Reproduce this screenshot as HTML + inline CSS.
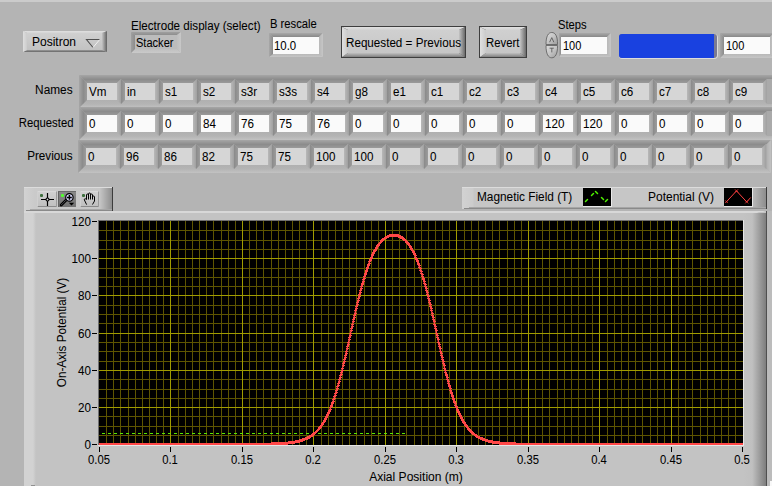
<!DOCTYPE html><html><head><meta charset="utf-8"><style>
html,body{margin:0;padding:0;}
body{width:772px;height:486px;overflow:hidden;position:relative;background:#b4b4b4;font-family:"Liberation Sans",sans-serif;}
.t{position:absolute;white-space:nowrap;line-height:13px;color:#000;-webkit-text-stroke:0.05px #000;}
svg{position:absolute;left:0;top:0;}

</style></head><body>
<svg width="772" height="486"><defs><linearGradient id="g0" x1="0" y1="0" x2="0" y2="1"><stop offset="0" stop-color="#e0e0e0"/><stop offset="1" stop-color="#d4d4d4"/></linearGradient><linearGradient id="g1" x1="1" y1="0" x2="0" y2="0"><stop offset="0" stop-color="#626262"/><stop offset="1" stop-color="#c4c4c4"/></linearGradient><linearGradient id="g2" x1="0" y1="1" x2="0" y2="0"><stop offset="0" stop-color="#666666"/><stop offset="1" stop-color="#9c9c9c"/></linearGradient><linearGradient id="g3" x1="0" y1="0" x2="1" y2="0"><stop offset="0" stop-color="#dedede"/><stop offset="1" stop-color="#cccccc"/></linearGradient><linearGradient id="g4" x1="0" y1="0" x2="0" y2="1"><stop offset="0" stop-color="#d0d0d0"/><stop offset="1" stop-color="#c2c2c2"/></linearGradient><linearGradient id="g5" x1="0" y1="0" x2="0" y2="1"><stop offset="0" stop-color="#a0a0a0"/><stop offset="1" stop-color="#8e8e8e"/></linearGradient><linearGradient id="g6" x1="1" y1="0" x2="0" y2="0"><stop offset="0" stop-color="#c8c8c8"/><stop offset="1" stop-color="#bebebe"/></linearGradient><linearGradient id="g7" x1="0" y1="1" x2="0" y2="0"><stop offset="0" stop-color="#cacaca"/><stop offset="1" stop-color="#c0c0c0"/></linearGradient><linearGradient id="g8" x1="0" y1="0" x2="1" y2="0"><stop offset="0" stop-color="#a0a0a0"/><stop offset="1" stop-color="#8c8c8c"/></linearGradient><linearGradient id="g9" x1="0" y1="0" x2="0" y2="1"><stop offset="0" stop-color="#a8a8a8"/><stop offset="1" stop-color="#888888"/></linearGradient><linearGradient id="g10" x1="1" y1="0" x2="0" y2="0"><stop offset="0" stop-color="#c6c6c6"/><stop offset="1" stop-color="#b8b8b8"/></linearGradient><linearGradient id="g11" x1="0" y1="1" x2="0" y2="0"><stop offset="0" stop-color="#c6c6c6"/><stop offset="1" stop-color="#b8b8b8"/></linearGradient><linearGradient id="g12" x1="0" y1="0" x2="1" y2="0"><stop offset="0" stop-color="#a8a8a8"/><stop offset="1" stop-color="#8a8a8a"/></linearGradient><linearGradient id="g13" x1="0" y1="0" x2="0" y2="1"><stop offset="0" stop-color="#e2e2e2"/><stop offset="1" stop-color="#d2d2d2"/></linearGradient><linearGradient id="g14" x1="1" y1="0" x2="0" y2="0"><stop offset="0" stop-color="#6a6a6a"/><stop offset="1" stop-color="#c4c4c4"/></linearGradient><linearGradient id="g15" x1="0" y1="1" x2="0" y2="0"><stop offset="0" stop-color="#808080"/><stop offset="1" stop-color="#c0c0c0"/></linearGradient><linearGradient id="g16" x1="0" y1="0" x2="1" y2="0"><stop offset="0" stop-color="#e0e0e0"/><stop offset="1" stop-color="#cacaca"/></linearGradient><linearGradient id="g17" x1="0" y1="0" x2="0" y2="1"><stop offset="0" stop-color="#d0d0d0"/><stop offset="1" stop-color="#c6c6c6"/></linearGradient><linearGradient id="g18" x1="0" y1="0" x2="0" y2="1"><stop offset="0" stop-color="#a6a6a6"/><stop offset="1" stop-color="#8e8e8e"/></linearGradient><linearGradient id="g19" x1="1" y1="0" x2="0" y2="0"><stop offset="0" stop-color="#c2c2c2"/><stop offset="1" stop-color="#b2b2b2"/></linearGradient><linearGradient id="g20" x1="0" y1="1" x2="0" y2="0"><stop offset="0" stop-color="#c2c2c2"/><stop offset="1" stop-color="#b4b4b4"/></linearGradient><linearGradient id="g21" x1="0" y1="0" x2="1" y2="0"><stop offset="0" stop-color="#a6a6a6"/><stop offset="1" stop-color="#8e8e8e"/></linearGradient><linearGradient id="g22" x1="0" y1="0" x2="0" y2="1"><stop offset="0" stop-color="#8a8a8a"/><stop offset="1" stop-color="#9a9a9a"/></linearGradient><linearGradient id="g23" x1="1" y1="0" x2="0" y2="0"><stop offset="0" stop-color="#a0a0a0"/><stop offset="1" stop-color="#b8b8b8"/></linearGradient><linearGradient id="g24" x1="0" y1="1" x2="0" y2="0"><stop offset="0" stop-color="#b4b4b4"/><stop offset="1" stop-color="#b0b0b0"/></linearGradient><linearGradient id="g25" x1="0" y1="0" x2="1" y2="0"><stop offset="0" stop-color="#8a8a8a"/><stop offset="1" stop-color="#9c9c9c"/></linearGradient><linearGradient id="g26" x1="0" y1="0" x2="1" y2="0"><stop offset="0" stop-color="#d2d2d2"/><stop offset="0.75" stop-color="#d2d2d2"/><stop offset="1" stop-color="#c3c3c3"/></linearGradient><linearGradient id="g27" x1="0" y1="0" x2="1" y2="0"><stop offset="0" stop-color="#c3c3c3"/><stop offset="0.4" stop-color="#c0c0c0"/><stop offset="1" stop-color="#7e7e7e"/></linearGradient><linearGradient id="g28" x1="0" y1="0" x2="1" y2="0"><stop offset="0" stop-color="#d2d2d2"/><stop offset="0.12" stop-color="#cacaca"/><stop offset="0.85" stop-color="#c6c6c6"/><stop offset="1" stop-color="#8a8a8a"/></linearGradient><linearGradient id="g29" x1="0" y1="0" x2="0" y2="1"><stop offset="0" stop-color="#d0d0d0"/><stop offset="1" stop-color="#c0c0c0"/></linearGradient><linearGradient id="g30" x1="0" y1="0" x2="0" y2="1"><stop offset="0" stop-color="#8a8a8a"/><stop offset="1" stop-color="#727272"/></linearGradient><linearGradient id="g31" x1="0" y1="0" x2="1" y2="0"><stop offset="0" stop-color="#d2d2d2"/><stop offset="0.035" stop-color="#cccccc"/><stop offset="0.04" stop-color="#c6c6c6"/><stop offset="0.94" stop-color="#c6c6c6"/><stop offset="1" stop-color="#8a8a8a"/></linearGradient></defs><rect x="0" y="0" width="772" height="2" fill="#cbcbcb"/>
<polygon points="23,31 107,31 102,33 27,33" fill="url(#g0)"/>
<polygon points="107,31 107,52 102,50 102,33" fill="url(#g1)"/>
<polygon points="23,52 107,52 102,50 27,50" fill="url(#g2)"/>
<polygon points="23,31 27,33 27,50 23,52" fill="url(#g3)"/>
<rect x="27" y="33" width="75" height="17" fill="url(#g4)"/>
<polygon points="131,32 181,32 177,35 135,35" fill="url(#g5)"/>
<polygon points="181,32 181,53 177,49 177,35" fill="url(#g6)"/>
<polygon points="131,53 181,53 177,49 135,49" fill="url(#g7)"/>
<polygon points="131,32 135,35 135,49 131,53" fill="url(#g8)"/>
<rect x="135" y="35" width="42" height="14" fill="#bcbcbc"/>
<polygon points="269,33 323,33 319,37 273,37" fill="url(#g9)"/>
<polygon points="323,33 323,57 319,54 319,37" fill="url(#g10)"/>
<polygon points="269,57 323,57 319,54 273,54" fill="url(#g11)"/>
<polygon points="269,33 273,37 273,54 269,57" fill="url(#g12)"/>
<rect x="273" y="37" width="46" height="17" fill="#fafafa"/>
<polygon points="559,33 611,33 607,37 561,37" fill="url(#g9)"/>
<polygon points="611,33 611,57 607,54 607,37" fill="url(#g10)"/>
<polygon points="559,57 611,57 607,54 561,54" fill="url(#g11)"/>
<polygon points="559,33 561,37 561,54 559,57" fill="url(#g12)"/>
<rect x="561" y="37" width="46" height="17" fill="#fafafa"/>
<polygon points="720,33 774,33 770,37 724,37" fill="url(#g9)"/>
<polygon points="774,33 774,58 770,54 770,37" fill="url(#g10)"/>
<polygon points="720,58 774,58 770,54 724,54" fill="url(#g11)"/>
<polygon points="720,33 724,37 724,54 720,58" fill="url(#g12)"/>
<rect x="724" y="37" width="46" height="17" fill="#fafafa"/>
<rect x="341" y="26" width="125" height="32" fill="#3e3e3e"/>
<polygon points="342,27 465,27 459,30 348,30" fill="url(#g13)"/>
<polygon points="465,27 465,57 459,53 459,30" fill="url(#g14)"/>
<polygon points="342,57 465,57 459,53 348,53" fill="url(#g15)"/>
<polygon points="342,27 348,30 348,53 342,57" fill="url(#g16)"/>
<rect x="348" y="30" width="111" height="23" fill="url(#g17)"/>
<rect x="479" y="26" width="48" height="32" fill="#3e3e3e"/>
<polygon points="480,27 526,27 520,30 486,30" fill="url(#g13)"/>
<polygon points="526,27 526,57 520,53 520,30" fill="url(#g14)"/>
<polygon points="480,57 526,57 520,53 486,53" fill="url(#g15)"/>
<polygon points="480,27 486,30 486,53 480,57" fill="url(#g16)"/>
<rect x="486" y="30" width="34" height="23" fill="url(#g17)"/>
<polygon points="79,75 776,75 772,79 83,79" fill="url(#g18)"/>
<polygon points="776,75 776,108 772,104 772,79" fill="url(#g19)"/>
<polygon points="79,108 776,108 772,104 83,104" fill="url(#g20)"/>
<polygon points="79,75 83,79 83,104 79,108" fill="url(#g21)"/>
<rect x="83" y="79" width="689" height="25" fill="#aaaaaa"/>
<polygon points="83,79 121,79 117,83 87,83" fill="url(#g22)"/>
<polygon points="121,79 121,104 117,100 117,83" fill="url(#g23)"/>
<polygon points="83,104 121,104 117,100 87,100" fill="url(#g24)"/>
<polygon points="83,79 87,83 87,100 83,104" fill="url(#g25)"/>
<rect x="87" y="83" width="30" height="17" fill="#d6d6d6"/>
<polygon points="121,79 159,79 155,83 125,83" fill="url(#g22)"/>
<polygon points="159,79 159,104 155,100 155,83" fill="url(#g23)"/>
<polygon points="121,104 159,104 155,100 125,100" fill="url(#g24)"/>
<polygon points="121,79 125,83 125,100 121,104" fill="url(#g25)"/>
<rect x="125" y="83" width="30" height="17" fill="#d6d6d6"/>
<polygon points="159,79 197,79 193,83 163,83" fill="url(#g22)"/>
<polygon points="197,79 197,104 193,100 193,83" fill="url(#g23)"/>
<polygon points="159,104 197,104 193,100 163,100" fill="url(#g24)"/>
<polygon points="159,79 163,83 163,100 159,104" fill="url(#g25)"/>
<rect x="163" y="83" width="30" height="17" fill="#d6d6d6"/>
<polygon points="197,79 235,79 231,83 201,83" fill="url(#g22)"/>
<polygon points="235,79 235,104 231,100 231,83" fill="url(#g23)"/>
<polygon points="197,104 235,104 231,100 201,100" fill="url(#g24)"/>
<polygon points="197,79 201,83 201,100 197,104" fill="url(#g25)"/>
<rect x="201" y="83" width="30" height="17" fill="#d6d6d6"/>
<polygon points="235,79 273,79 269,83 239,83" fill="url(#g22)"/>
<polygon points="273,79 273,104 269,100 269,83" fill="url(#g23)"/>
<polygon points="235,104 273,104 269,100 239,100" fill="url(#g24)"/>
<polygon points="235,79 239,83 239,100 235,104" fill="url(#g25)"/>
<rect x="239" y="83" width="30" height="17" fill="#d6d6d6"/>
<polygon points="273,79 311,79 307,83 277,83" fill="url(#g22)"/>
<polygon points="311,79 311,104 307,100 307,83" fill="url(#g23)"/>
<polygon points="273,104 311,104 307,100 277,100" fill="url(#g24)"/>
<polygon points="273,79 277,83 277,100 273,104" fill="url(#g25)"/>
<rect x="277" y="83" width="30" height="17" fill="#d6d6d6"/>
<polygon points="311,79 349,79 345,83 315,83" fill="url(#g22)"/>
<polygon points="349,79 349,104 345,100 345,83" fill="url(#g23)"/>
<polygon points="311,104 349,104 345,100 315,100" fill="url(#g24)"/>
<polygon points="311,79 315,83 315,100 311,104" fill="url(#g25)"/>
<rect x="315" y="83" width="30" height="17" fill="#d6d6d6"/>
<polygon points="349,79 387,79 383,83 353,83" fill="url(#g22)"/>
<polygon points="387,79 387,104 383,100 383,83" fill="url(#g23)"/>
<polygon points="349,104 387,104 383,100 353,100" fill="url(#g24)"/>
<polygon points="349,79 353,83 353,100 349,104" fill="url(#g25)"/>
<rect x="353" y="83" width="30" height="17" fill="#d6d6d6"/>
<polygon points="387,79 425,79 421,83 391,83" fill="url(#g22)"/>
<polygon points="425,79 425,104 421,100 421,83" fill="url(#g23)"/>
<polygon points="387,104 425,104 421,100 391,100" fill="url(#g24)"/>
<polygon points="387,79 391,83 391,100 387,104" fill="url(#g25)"/>
<rect x="391" y="83" width="30" height="17" fill="#d6d6d6"/>
<polygon points="425,79 463,79 459,83 429,83" fill="url(#g22)"/>
<polygon points="463,79 463,104 459,100 459,83" fill="url(#g23)"/>
<polygon points="425,104 463,104 459,100 429,100" fill="url(#g24)"/>
<polygon points="425,79 429,83 429,100 425,104" fill="url(#g25)"/>
<rect x="429" y="83" width="30" height="17" fill="#d6d6d6"/>
<polygon points="463,79 501,79 497,83 467,83" fill="url(#g22)"/>
<polygon points="501,79 501,104 497,100 497,83" fill="url(#g23)"/>
<polygon points="463,104 501,104 497,100 467,100" fill="url(#g24)"/>
<polygon points="463,79 467,83 467,100 463,104" fill="url(#g25)"/>
<rect x="467" y="83" width="30" height="17" fill="#d6d6d6"/>
<polygon points="501,79 539,79 535,83 505,83" fill="url(#g22)"/>
<polygon points="539,79 539,104 535,100 535,83" fill="url(#g23)"/>
<polygon points="501,104 539,104 535,100 505,100" fill="url(#g24)"/>
<polygon points="501,79 505,83 505,100 501,104" fill="url(#g25)"/>
<rect x="505" y="83" width="30" height="17" fill="#d6d6d6"/>
<polygon points="539,79 577,79 573,83 543,83" fill="url(#g22)"/>
<polygon points="577,79 577,104 573,100 573,83" fill="url(#g23)"/>
<polygon points="539,104 577,104 573,100 543,100" fill="url(#g24)"/>
<polygon points="539,79 543,83 543,100 539,104" fill="url(#g25)"/>
<rect x="543" y="83" width="30" height="17" fill="#d6d6d6"/>
<polygon points="577,79 615,79 611,83 581,83" fill="url(#g22)"/>
<polygon points="615,79 615,104 611,100 611,83" fill="url(#g23)"/>
<polygon points="577,104 615,104 611,100 581,100" fill="url(#g24)"/>
<polygon points="577,79 581,83 581,100 577,104" fill="url(#g25)"/>
<rect x="581" y="83" width="30" height="17" fill="#d6d6d6"/>
<polygon points="615,79 653,79 649,83 619,83" fill="url(#g22)"/>
<polygon points="653,79 653,104 649,100 649,83" fill="url(#g23)"/>
<polygon points="615,104 653,104 649,100 619,100" fill="url(#g24)"/>
<polygon points="615,79 619,83 619,100 615,104" fill="url(#g25)"/>
<rect x="619" y="83" width="30" height="17" fill="#d6d6d6"/>
<polygon points="653,79 691,79 687,83 657,83" fill="url(#g22)"/>
<polygon points="691,79 691,104 687,100 687,83" fill="url(#g23)"/>
<polygon points="653,104 691,104 687,100 657,100" fill="url(#g24)"/>
<polygon points="653,79 657,83 657,100 653,104" fill="url(#g25)"/>
<rect x="657" y="83" width="30" height="17" fill="#d6d6d6"/>
<polygon points="691,79 729,79 725,83 695,83" fill="url(#g22)"/>
<polygon points="729,79 729,104 725,100 725,83" fill="url(#g23)"/>
<polygon points="691,104 729,104 725,100 695,100" fill="url(#g24)"/>
<polygon points="691,79 695,83 695,100 691,104" fill="url(#g25)"/>
<rect x="695" y="83" width="30" height="17" fill="#d6d6d6"/>
<polygon points="729,79 767,79 763,83 733,83" fill="url(#g22)"/>
<polygon points="767,79 767,104 763,100 763,83" fill="url(#g23)"/>
<polygon points="729,104 767,104 763,100 733,100" fill="url(#g24)"/>
<polygon points="729,79 733,83 733,100 729,104" fill="url(#g25)"/>
<rect x="733" y="83" width="30" height="17" fill="#d6d6d6"/>
<polygon points="79,107 776,107 772,111 83,111" fill="url(#g18)"/>
<polygon points="776,107 776,140 772,136 772,111" fill="url(#g19)"/>
<polygon points="79,140 776,140 772,136 83,136" fill="url(#g20)"/>
<polygon points="79,107 83,111 83,136 79,140" fill="url(#g21)"/>
<rect x="83" y="111" width="689" height="25" fill="#aaaaaa"/>
<polygon points="83,111 121,111 117,115 87,115" fill="url(#g22)"/>
<polygon points="121,111 121,136 117,132 117,115" fill="url(#g23)"/>
<polygon points="83,136 121,136 117,132 87,132" fill="url(#g24)"/>
<polygon points="83,111 87,115 87,132 83,136" fill="url(#g25)"/>
<rect x="87" y="115" width="30" height="17" fill="#fafafa"/>
<polygon points="121,111 159,111 155,115 125,115" fill="url(#g22)"/>
<polygon points="159,111 159,136 155,132 155,115" fill="url(#g23)"/>
<polygon points="121,136 159,136 155,132 125,132" fill="url(#g24)"/>
<polygon points="121,111 125,115 125,132 121,136" fill="url(#g25)"/>
<rect x="125" y="115" width="30" height="17" fill="#fafafa"/>
<polygon points="159,111 197,111 193,115 163,115" fill="url(#g22)"/>
<polygon points="197,111 197,136 193,132 193,115" fill="url(#g23)"/>
<polygon points="159,136 197,136 193,132 163,132" fill="url(#g24)"/>
<polygon points="159,111 163,115 163,132 159,136" fill="url(#g25)"/>
<rect x="163" y="115" width="30" height="17" fill="#fafafa"/>
<polygon points="197,111 235,111 231,115 201,115" fill="url(#g22)"/>
<polygon points="235,111 235,136 231,132 231,115" fill="url(#g23)"/>
<polygon points="197,136 235,136 231,132 201,132" fill="url(#g24)"/>
<polygon points="197,111 201,115 201,132 197,136" fill="url(#g25)"/>
<rect x="201" y="115" width="30" height="17" fill="#fafafa"/>
<polygon points="235,111 273,111 269,115 239,115" fill="url(#g22)"/>
<polygon points="273,111 273,136 269,132 269,115" fill="url(#g23)"/>
<polygon points="235,136 273,136 269,132 239,132" fill="url(#g24)"/>
<polygon points="235,111 239,115 239,132 235,136" fill="url(#g25)"/>
<rect x="239" y="115" width="30" height="17" fill="#fafafa"/>
<polygon points="273,111 311,111 307,115 277,115" fill="url(#g22)"/>
<polygon points="311,111 311,136 307,132 307,115" fill="url(#g23)"/>
<polygon points="273,136 311,136 307,132 277,132" fill="url(#g24)"/>
<polygon points="273,111 277,115 277,132 273,136" fill="url(#g25)"/>
<rect x="277" y="115" width="30" height="17" fill="#fafafa"/>
<polygon points="311,111 349,111 345,115 315,115" fill="url(#g22)"/>
<polygon points="349,111 349,136 345,132 345,115" fill="url(#g23)"/>
<polygon points="311,136 349,136 345,132 315,132" fill="url(#g24)"/>
<polygon points="311,111 315,115 315,132 311,136" fill="url(#g25)"/>
<rect x="315" y="115" width="30" height="17" fill="#fafafa"/>
<polygon points="349,111 387,111 383,115 353,115" fill="url(#g22)"/>
<polygon points="387,111 387,136 383,132 383,115" fill="url(#g23)"/>
<polygon points="349,136 387,136 383,132 353,132" fill="url(#g24)"/>
<polygon points="349,111 353,115 353,132 349,136" fill="url(#g25)"/>
<rect x="353" y="115" width="30" height="17" fill="#fafafa"/>
<polygon points="387,111 425,111 421,115 391,115" fill="url(#g22)"/>
<polygon points="425,111 425,136 421,132 421,115" fill="url(#g23)"/>
<polygon points="387,136 425,136 421,132 391,132" fill="url(#g24)"/>
<polygon points="387,111 391,115 391,132 387,136" fill="url(#g25)"/>
<rect x="391" y="115" width="30" height="17" fill="#fafafa"/>
<polygon points="425,111 463,111 459,115 429,115" fill="url(#g22)"/>
<polygon points="463,111 463,136 459,132 459,115" fill="url(#g23)"/>
<polygon points="425,136 463,136 459,132 429,132" fill="url(#g24)"/>
<polygon points="425,111 429,115 429,132 425,136" fill="url(#g25)"/>
<rect x="429" y="115" width="30" height="17" fill="#fafafa"/>
<polygon points="463,111 501,111 497,115 467,115" fill="url(#g22)"/>
<polygon points="501,111 501,136 497,132 497,115" fill="url(#g23)"/>
<polygon points="463,136 501,136 497,132 467,132" fill="url(#g24)"/>
<polygon points="463,111 467,115 467,132 463,136" fill="url(#g25)"/>
<rect x="467" y="115" width="30" height="17" fill="#fafafa"/>
<polygon points="501,111 539,111 535,115 505,115" fill="url(#g22)"/>
<polygon points="539,111 539,136 535,132 535,115" fill="url(#g23)"/>
<polygon points="501,136 539,136 535,132 505,132" fill="url(#g24)"/>
<polygon points="501,111 505,115 505,132 501,136" fill="url(#g25)"/>
<rect x="505" y="115" width="30" height="17" fill="#fafafa"/>
<polygon points="539,111 577,111 573,115 543,115" fill="url(#g22)"/>
<polygon points="577,111 577,136 573,132 573,115" fill="url(#g23)"/>
<polygon points="539,136 577,136 573,132 543,132" fill="url(#g24)"/>
<polygon points="539,111 543,115 543,132 539,136" fill="url(#g25)"/>
<rect x="543" y="115" width="30" height="17" fill="#fafafa"/>
<polygon points="577,111 615,111 611,115 581,115" fill="url(#g22)"/>
<polygon points="615,111 615,136 611,132 611,115" fill="url(#g23)"/>
<polygon points="577,136 615,136 611,132 581,132" fill="url(#g24)"/>
<polygon points="577,111 581,115 581,132 577,136" fill="url(#g25)"/>
<rect x="581" y="115" width="30" height="17" fill="#fafafa"/>
<polygon points="615,111 653,111 649,115 619,115" fill="url(#g22)"/>
<polygon points="653,111 653,136 649,132 649,115" fill="url(#g23)"/>
<polygon points="615,136 653,136 649,132 619,132" fill="url(#g24)"/>
<polygon points="615,111 619,115 619,132 615,136" fill="url(#g25)"/>
<rect x="619" y="115" width="30" height="17" fill="#fafafa"/>
<polygon points="653,111 691,111 687,115 657,115" fill="url(#g22)"/>
<polygon points="691,111 691,136 687,132 687,115" fill="url(#g23)"/>
<polygon points="653,136 691,136 687,132 657,132" fill="url(#g24)"/>
<polygon points="653,111 657,115 657,132 653,136" fill="url(#g25)"/>
<rect x="657" y="115" width="30" height="17" fill="#fafafa"/>
<polygon points="691,111 729,111 725,115 695,115" fill="url(#g22)"/>
<polygon points="729,111 729,136 725,132 725,115" fill="url(#g23)"/>
<polygon points="691,136 729,136 725,132 695,132" fill="url(#g24)"/>
<polygon points="691,111 695,115 695,132 691,136" fill="url(#g25)"/>
<rect x="695" y="115" width="30" height="17" fill="#fafafa"/>
<polygon points="729,111 767,111 763,115 733,115" fill="url(#g22)"/>
<polygon points="767,111 767,136 763,132 763,115" fill="url(#g23)"/>
<polygon points="729,136 767,136 763,132 733,132" fill="url(#g24)"/>
<polygon points="729,111 733,115 733,132 729,136" fill="url(#g25)"/>
<rect x="733" y="115" width="30" height="17" fill="#fafafa"/>
<polygon points="78,140 771,140 767,144 82,144" fill="url(#g18)"/>
<polygon points="771,140 771,173 767,169 767,144" fill="url(#g19)"/>
<polygon points="78,173 771,173 767,169 82,169" fill="url(#g20)"/>
<polygon points="78,140 82,144 82,169 78,173" fill="url(#g21)"/>
<rect x="82" y="144" width="685" height="25" fill="#aaaaaa"/>
<polygon points="82,144 120,144 116,148 86,148" fill="url(#g22)"/>
<polygon points="120,144 120,169 116,165 116,148" fill="url(#g23)"/>
<polygon points="82,169 120,169 116,165 86,165" fill="url(#g24)"/>
<polygon points="82,144 86,148 86,165 82,169" fill="url(#g25)"/>
<rect x="86" y="148" width="30" height="17" fill="#d6d6d6"/>
<polygon points="120,144 158,144 154,148 124,148" fill="url(#g22)"/>
<polygon points="158,144 158,169 154,165 154,148" fill="url(#g23)"/>
<polygon points="120,169 158,169 154,165 124,165" fill="url(#g24)"/>
<polygon points="120,144 124,148 124,165 120,169" fill="url(#g25)"/>
<rect x="124" y="148" width="30" height="17" fill="#d6d6d6"/>
<polygon points="158,144 196,144 192,148 162,148" fill="url(#g22)"/>
<polygon points="196,144 196,169 192,165 192,148" fill="url(#g23)"/>
<polygon points="158,169 196,169 192,165 162,165" fill="url(#g24)"/>
<polygon points="158,144 162,148 162,165 158,169" fill="url(#g25)"/>
<rect x="162" y="148" width="30" height="17" fill="#d6d6d6"/>
<polygon points="196,144 234,144 230,148 200,148" fill="url(#g22)"/>
<polygon points="234,144 234,169 230,165 230,148" fill="url(#g23)"/>
<polygon points="196,169 234,169 230,165 200,165" fill="url(#g24)"/>
<polygon points="196,144 200,148 200,165 196,169" fill="url(#g25)"/>
<rect x="200" y="148" width="30" height="17" fill="#d6d6d6"/>
<polygon points="234,144 272,144 268,148 238,148" fill="url(#g22)"/>
<polygon points="272,144 272,169 268,165 268,148" fill="url(#g23)"/>
<polygon points="234,169 272,169 268,165 238,165" fill="url(#g24)"/>
<polygon points="234,144 238,148 238,165 234,169" fill="url(#g25)"/>
<rect x="238" y="148" width="30" height="17" fill="#d6d6d6"/>
<polygon points="272,144 310,144 306,148 276,148" fill="url(#g22)"/>
<polygon points="310,144 310,169 306,165 306,148" fill="url(#g23)"/>
<polygon points="272,169 310,169 306,165 276,165" fill="url(#g24)"/>
<polygon points="272,144 276,148 276,165 272,169" fill="url(#g25)"/>
<rect x="276" y="148" width="30" height="17" fill="#d6d6d6"/>
<polygon points="310,144 348,144 344,148 314,148" fill="url(#g22)"/>
<polygon points="348,144 348,169 344,165 344,148" fill="url(#g23)"/>
<polygon points="310,169 348,169 344,165 314,165" fill="url(#g24)"/>
<polygon points="310,144 314,148 314,165 310,169" fill="url(#g25)"/>
<rect x="314" y="148" width="30" height="17" fill="#d6d6d6"/>
<polygon points="348,144 386,144 382,148 352,148" fill="url(#g22)"/>
<polygon points="386,144 386,169 382,165 382,148" fill="url(#g23)"/>
<polygon points="348,169 386,169 382,165 352,165" fill="url(#g24)"/>
<polygon points="348,144 352,148 352,165 348,169" fill="url(#g25)"/>
<rect x="352" y="148" width="30" height="17" fill="#d6d6d6"/>
<polygon points="386,144 424,144 420,148 390,148" fill="url(#g22)"/>
<polygon points="424,144 424,169 420,165 420,148" fill="url(#g23)"/>
<polygon points="386,169 424,169 420,165 390,165" fill="url(#g24)"/>
<polygon points="386,144 390,148 390,165 386,169" fill="url(#g25)"/>
<rect x="390" y="148" width="30" height="17" fill="#d6d6d6"/>
<polygon points="424,144 462,144 458,148 428,148" fill="url(#g22)"/>
<polygon points="462,144 462,169 458,165 458,148" fill="url(#g23)"/>
<polygon points="424,169 462,169 458,165 428,165" fill="url(#g24)"/>
<polygon points="424,144 428,148 428,165 424,169" fill="url(#g25)"/>
<rect x="428" y="148" width="30" height="17" fill="#d6d6d6"/>
<polygon points="462,144 500,144 496,148 466,148" fill="url(#g22)"/>
<polygon points="500,144 500,169 496,165 496,148" fill="url(#g23)"/>
<polygon points="462,169 500,169 496,165 466,165" fill="url(#g24)"/>
<polygon points="462,144 466,148 466,165 462,169" fill="url(#g25)"/>
<rect x="466" y="148" width="30" height="17" fill="#d6d6d6"/>
<polygon points="500,144 538,144 534,148 504,148" fill="url(#g22)"/>
<polygon points="538,144 538,169 534,165 534,148" fill="url(#g23)"/>
<polygon points="500,169 538,169 534,165 504,165" fill="url(#g24)"/>
<polygon points="500,144 504,148 504,165 500,169" fill="url(#g25)"/>
<rect x="504" y="148" width="30" height="17" fill="#d6d6d6"/>
<polygon points="538,144 576,144 572,148 542,148" fill="url(#g22)"/>
<polygon points="576,144 576,169 572,165 572,148" fill="url(#g23)"/>
<polygon points="538,169 576,169 572,165 542,165" fill="url(#g24)"/>
<polygon points="538,144 542,148 542,165 538,169" fill="url(#g25)"/>
<rect x="542" y="148" width="30" height="17" fill="#d6d6d6"/>
<polygon points="576,144 614,144 610,148 580,148" fill="url(#g22)"/>
<polygon points="614,144 614,169 610,165 610,148" fill="url(#g23)"/>
<polygon points="576,169 614,169 610,165 580,165" fill="url(#g24)"/>
<polygon points="576,144 580,148 580,165 576,169" fill="url(#g25)"/>
<rect x="580" y="148" width="30" height="17" fill="#d6d6d6"/>
<polygon points="614,144 652,144 648,148 618,148" fill="url(#g22)"/>
<polygon points="652,144 652,169 648,165 648,148" fill="url(#g23)"/>
<polygon points="614,169 652,169 648,165 618,165" fill="url(#g24)"/>
<polygon points="614,144 618,148 618,165 614,169" fill="url(#g25)"/>
<rect x="618" y="148" width="30" height="17" fill="#d6d6d6"/>
<polygon points="652,144 690,144 686,148 656,148" fill="url(#g22)"/>
<polygon points="690,144 690,169 686,165 686,148" fill="url(#g23)"/>
<polygon points="652,169 690,169 686,165 656,165" fill="url(#g24)"/>
<polygon points="652,144 656,148 656,165 652,169" fill="url(#g25)"/>
<rect x="656" y="148" width="30" height="17" fill="#d6d6d6"/>
<polygon points="690,144 728,144 724,148 694,148" fill="url(#g22)"/>
<polygon points="728,144 728,169 724,165 724,148" fill="url(#g23)"/>
<polygon points="690,169 728,169 724,165 694,165" fill="url(#g24)"/>
<polygon points="690,144 694,148 694,165 690,169" fill="url(#g25)"/>
<rect x="694" y="148" width="30" height="17" fill="#d6d6d6"/>
<polygon points="728,144 766,144 762,148 732,148" fill="url(#g22)"/>
<polygon points="766,144 766,169 762,165 762,148" fill="url(#g23)"/>
<polygon points="728,169 766,169 762,165 732,165" fill="url(#g24)"/>
<polygon points="728,144 732,148 732,165 728,169" fill="url(#g25)"/>
<rect x="732" y="148" width="30" height="17" fill="#d6d6d6"/>
<rect x="24" y="211" width="743" height="275" fill="#c3c3c3"/>
<polygon points="24,211 765,211 763,212 759,212 757,213 24,213" fill="#d8d8d8"/>
<rect x="24" y="213" width="12" height="273" fill="url(#g26)"/>
<rect x="743" y="213" width="23" height="273" fill="url(#g27)"/>
<rect x="766" y="211" width="1" height="275" fill="#505050"/>
<rect x="767" y="211" width="5" height="275" fill="#bcbcbc"/>
<rect x="31" y="485" width="4" height="1" fill="#909090"/>
<rect x="770" y="481" width="2" height="5" fill="#f8f8f8"/>
<rect x="24" y="187" width="89" height="24" fill="url(#g28)"/>
<rect x="24" y="187" width="89" height="1" fill="#dcdcdc"/>
<rect x="30" y="209" width="83" height="1" fill="#a6a6a6"/>
<rect x="26" y="210" width="87" height="1" fill="#8a8a8a"/>
<rect x="112" y="187" width="1" height="24" fill="#3c3c3c"/>
<polygon points="37,191 57,191 56,192 38,192" fill="#d8d8d8"/>
<polygon points="57,191 57,207 56,206 56,192" fill="#9a9a9a"/>
<polygon points="37,207 57,207 56,206 38,206" fill="#8a8a8a"/>
<polygon points="37,191 38,192 38,206 37,207" fill="#d0d0d0"/>
<rect x="38" y="192" width="18" height="14" fill="url(#g29)"/>
<rect x="58" y="191" width="18" height="16" fill="url(#g30)"/>
<rect x="58" y="191" width="1" height="16" fill="#626262"/>
<rect x="58" y="191" width="18" height="1" fill="#6a6a6a"/>
<polygon points="80,191 99,191 98,192 81,192" fill="#d8d8d8"/>
<polygon points="99,191 99,207 98,206 98,192" fill="#9a9a9a"/>
<polygon points="80,207 99,207 98,206 81,206" fill="#8a8a8a"/>
<polygon points="80,191 81,192 81,206 80,207" fill="#d0d0d0"/>
<rect x="81" y="192" width="17" height="14" fill="url(#g29)"/>
<rect x="462" y="187" width="305" height="22" fill="url(#g31)"/>
<rect x="462" y="187" width="305" height="1" fill="#dcdcdc"/>
<rect x="469" y="207" width="298" height="1" fill="#a6a6a6"/>
<rect x="464" y="208" width="303" height="1" fill="#8a8a8a"/>
<rect x="766" y="187" width="1" height="22" fill="#3c3c3c"/>
<rect x="583" y="188" width="29" height="19" fill="#e8e8e8"/>
<rect x="583" y="188" width="28" height="18" fill="#000"/>
<rect x="724" y="188" width="29" height="19" fill="#e8e8e8"/>
<rect x="724" y="188" width="28" height="18" fill="#000"/>
<path d="M622 34 H714 Q718 34 718 38 V55 Q718 59 714 59 H622 Q619 59 619 56 Z" fill="#dcdcdc"/>
<path d="M622 34 H714 Q717 34 717 37 V55 Q717 58 714 58 H622 Q619 58 619 55 V37 Q619 34 622 34 Z" fill="#7a7a92"/>
<path d="M622 34 H714 V58 H622 Q619 58 619 55 V37 Q619 34 622 34 Z" fill="#1941e0"/></svg>
<div class="t" style="left:31.5px;top:36.37px;font-size:12.5px;transform-origin:0 0;transform:scaleX(0.96);">Positron</div>
<div class="t" style="left:131.0px;top:20.37px;font-size:12.5px;transform-origin:0 0;transform:scaleX(0.929);">Electrode display (select)</div>
<div class="t" style="left:136.0px;top:36.87px;font-size:12.5px;transform-origin:0 0;transform:scaleX(0.884);">Stacker</div>
<div class="t" style="left:269.5px;top:17.97px;font-size:12.5px;transform-origin:0 0;transform:scaleX(0.899);">B rescale</div>
<div class="t" style="left:274.0px;top:40.37px;font-size:12.5px;transform-origin:0 0;transform:scaleX(0.913);">10.0</div>
<div class="t" style="left:345.5px;top:37.37px;font-size:12.5px;transform-origin:0 0;transform:scaleX(0.932);">Requested = Previous</div>
<div class="t" style="left:485.5px;top:37.37px;font-size:12.5px;transform-origin:0 0;transform:scaleX(0.906);">Revert</div>
<div class="t" style="left:558.0px;top:19.27px;font-size:12.5px;transform-origin:0 0;transform:scaleX(0.897);">Steps</div>
<div class="t" style="left:563.0px;top:39.97px;font-size:12.5px;transform-origin:0 0;transform:scaleX(0.88);">100</div>
<div class="t" style="left:725.6px;top:40.07px;font-size:12.5px;transform-origin:0 0;transform:scaleX(0.88);">100</div>
<div class="t" style="right:699.0px;top:84.37px;font-size:12.5px;transform-origin:100% 0;transform:scaleX(0.947);">Names</div>
<div class="t" style="left:89.0px;top:86.37px;font-size:12.5px;transform-origin:0 0;transform:scaleX(0.93);">Vm</div>
<div class="t" style="left:127.0px;top:86.37px;font-size:12.5px;transform-origin:0 0;transform:scaleX(0.93);">in</div>
<div class="t" style="left:165.0px;top:86.37px;font-size:12.5px;transform-origin:0 0;transform:scaleX(0.93);">s1</div>
<div class="t" style="left:203.0px;top:86.37px;font-size:12.5px;transform-origin:0 0;transform:scaleX(0.93);">s2</div>
<div class="t" style="left:241.0px;top:86.37px;font-size:12.5px;transform-origin:0 0;transform:scaleX(0.93);">s3r</div>
<div class="t" style="left:279.0px;top:86.37px;font-size:12.5px;transform-origin:0 0;transform:scaleX(0.93);">s3s</div>
<div class="t" style="left:317.0px;top:86.37px;font-size:12.5px;transform-origin:0 0;transform:scaleX(0.93);">s4</div>
<div class="t" style="left:355.0px;top:86.37px;font-size:12.5px;transform-origin:0 0;transform:scaleX(0.93);">g8</div>
<div class="t" style="left:393.0px;top:86.37px;font-size:12.5px;transform-origin:0 0;transform:scaleX(0.93);">e1</div>
<div class="t" style="left:431.0px;top:86.37px;font-size:12.5px;transform-origin:0 0;transform:scaleX(0.93);">c1</div>
<div class="t" style="left:469.0px;top:86.37px;font-size:12.5px;transform-origin:0 0;transform:scaleX(0.93);">c2</div>
<div class="t" style="left:507.0px;top:86.37px;font-size:12.5px;transform-origin:0 0;transform:scaleX(0.93);">c3</div>
<div class="t" style="left:545.0px;top:86.37px;font-size:12.5px;transform-origin:0 0;transform:scaleX(0.93);">c4</div>
<div class="t" style="left:583.0px;top:86.37px;font-size:12.5px;transform-origin:0 0;transform:scaleX(0.93);">c5</div>
<div class="t" style="left:621.0px;top:86.37px;font-size:12.5px;transform-origin:0 0;transform:scaleX(0.93);">c6</div>
<div class="t" style="left:659.0px;top:86.37px;font-size:12.5px;transform-origin:0 0;transform:scaleX(0.93);">c7</div>
<div class="t" style="left:697.0px;top:86.37px;font-size:12.5px;transform-origin:0 0;transform:scaleX(0.93);">c8</div>
<div class="t" style="left:735.0px;top:86.37px;font-size:12.5px;transform-origin:0 0;transform:scaleX(0.93);">c9</div>
<div class="t" style="right:699.0px;top:117.37px;font-size:12.5px;transform-origin:100% 0;transform:scaleX(0.905);">Requested</div>
<div class="t" style="left:89.0px;top:118.37px;font-size:12.5px;transform-origin:0 0;transform:scaleX(0.93);">0</div>
<div class="t" style="left:127.0px;top:118.37px;font-size:12.5px;transform-origin:0 0;transform:scaleX(0.93);">0</div>
<div class="t" style="left:165.0px;top:118.37px;font-size:12.5px;transform-origin:0 0;transform:scaleX(0.93);">0</div>
<div class="t" style="left:203.0px;top:118.37px;font-size:12.5px;transform-origin:0 0;transform:scaleX(0.93);">84</div>
<div class="t" style="left:241.0px;top:118.37px;font-size:12.5px;transform-origin:0 0;transform:scaleX(0.93);">76</div>
<div class="t" style="left:279.0px;top:118.37px;font-size:12.5px;transform-origin:0 0;transform:scaleX(0.93);">75</div>
<div class="t" style="left:317.0px;top:118.37px;font-size:12.5px;transform-origin:0 0;transform:scaleX(0.93);">76</div>
<div class="t" style="left:355.0px;top:118.37px;font-size:12.5px;transform-origin:0 0;transform:scaleX(0.93);">0</div>
<div class="t" style="left:393.0px;top:118.37px;font-size:12.5px;transform-origin:0 0;transform:scaleX(0.93);">0</div>
<div class="t" style="left:431.0px;top:118.37px;font-size:12.5px;transform-origin:0 0;transform:scaleX(0.93);">0</div>
<div class="t" style="left:469.0px;top:118.37px;font-size:12.5px;transform-origin:0 0;transform:scaleX(0.93);">0</div>
<div class="t" style="left:507.0px;top:118.37px;font-size:12.5px;transform-origin:0 0;transform:scaleX(0.93);">0</div>
<div class="t" style="left:545.0px;top:118.37px;font-size:12.5px;transform-origin:0 0;transform:scaleX(0.93);">120</div>
<div class="t" style="left:583.0px;top:118.37px;font-size:12.5px;transform-origin:0 0;transform:scaleX(0.93);">120</div>
<div class="t" style="left:621.0px;top:118.37px;font-size:12.5px;transform-origin:0 0;transform:scaleX(0.93);">0</div>
<div class="t" style="left:659.0px;top:118.37px;font-size:12.5px;transform-origin:0 0;transform:scaleX(0.93);">0</div>
<div class="t" style="left:697.0px;top:118.37px;font-size:12.5px;transform-origin:0 0;transform:scaleX(0.93);">0</div>
<div class="t" style="left:735.0px;top:118.37px;font-size:12.5px;transform-origin:0 0;transform:scaleX(0.93);">0</div>
<div class="t" style="right:699.0px;top:150.37px;font-size:12.5px;transform-origin:100% 0;transform:scaleX(0.935);">Previous</div>
<div class="t" style="left:88.0px;top:151.37px;font-size:12.5px;transform-origin:0 0;transform:scaleX(0.93);">0</div>
<div class="t" style="left:126.0px;top:151.37px;font-size:12.5px;transform-origin:0 0;transform:scaleX(0.93);">96</div>
<div class="t" style="left:164.0px;top:151.37px;font-size:12.5px;transform-origin:0 0;transform:scaleX(0.93);">86</div>
<div class="t" style="left:202.0px;top:151.37px;font-size:12.5px;transform-origin:0 0;transform:scaleX(0.93);">82</div>
<div class="t" style="left:240.0px;top:151.37px;font-size:12.5px;transform-origin:0 0;transform:scaleX(0.93);">75</div>
<div class="t" style="left:278.0px;top:151.37px;font-size:12.5px;transform-origin:0 0;transform:scaleX(0.93);">75</div>
<div class="t" style="left:316.0px;top:151.37px;font-size:12.5px;transform-origin:0 0;transform:scaleX(0.93);">100</div>
<div class="t" style="left:354.0px;top:151.37px;font-size:12.5px;transform-origin:0 0;transform:scaleX(0.93);">100</div>
<div class="t" style="left:392.0px;top:151.37px;font-size:12.5px;transform-origin:0 0;transform:scaleX(0.93);">0</div>
<div class="t" style="left:430.0px;top:151.37px;font-size:12.5px;transform-origin:0 0;transform:scaleX(0.93);">0</div>
<div class="t" style="left:468.0px;top:151.37px;font-size:12.5px;transform-origin:0 0;transform:scaleX(0.93);">0</div>
<div class="t" style="left:506.0px;top:151.37px;font-size:12.5px;transform-origin:0 0;transform:scaleX(0.93);">0</div>
<div class="t" style="left:544.0px;top:151.37px;font-size:12.5px;transform-origin:0 0;transform:scaleX(0.93);">0</div>
<div class="t" style="left:582.0px;top:151.37px;font-size:12.5px;transform-origin:0 0;transform:scaleX(0.93);">0</div>
<div class="t" style="left:620.0px;top:151.37px;font-size:12.5px;transform-origin:0 0;transform:scaleX(0.93);">0</div>
<div class="t" style="left:658.0px;top:151.37px;font-size:12.5px;transform-origin:0 0;transform:scaleX(0.93);">0</div>
<div class="t" style="left:696.0px;top:151.37px;font-size:12.5px;transform-origin:0 0;transform:scaleX(0.93);">0</div>
<div class="t" style="left:734.0px;top:151.37px;font-size:12.5px;transform-origin:0 0;transform:scaleX(0.93);">0</div>
<div class="t" style="left:476.5px;top:191.37px;font-size:12.5px;transform-origin:0 0;transform:scaleX(0.946);">Magnetic Field (T)</div>
<div class="t" style="left:647.5px;top:191.37px;font-size:12.5px;transform-origin:0 0;transform:scaleX(0.958);">Potential (V)</div>
<svg width="772" height="486">
<path d="M99.5 39.5 L86.5 39.5 L93 47.5" fill="none" stroke="#505050" stroke-width="1.1"/><path d="M99.5 39.8 L93 47.5" fill="none" stroke="#f0f0f0" stroke-width="1"/>
<defs><linearGradient id="incg" x1="0" y1="0" x2="1" y2="1"><stop offset="0" stop-color="#dcdcdc"/><stop offset="0.5" stop-color="#c4c4c4"/><stop offset="1" stop-color="#9a9a9a"/></linearGradient></defs>
<path d="M546 44.5 C546 36 548.3 32.5 551.8 32.5 C555.3 32.5 557.6 36 557.6 44.5 Z" fill="url(#incg)" stroke="#5a5a5a" stroke-width="0.8"/>
<path d="M546 45.5 C546 54 548.3 57.8 551.8 57.8 C555.3 57.8 557.6 54 557.6 45.5 Z" fill="url(#incg)" stroke="#5a5a5a" stroke-width="0.8"/>
<path d="M549.6 42.2 L551.8 37.6 L553.8 42.2" stroke="#505050" stroke-width="0.8" fill="none"/>
<path d="M549.6 48.2 H553.8 M551.8 48.2 V52.4" stroke="#505050" stroke-width="0.8" fill="none"/>
<rect x="40" y="194" width="3" height="3" rx="1" fill="#3c6e3c"/>
<path d="M41 199.5 H54 M47.5 193 V206" stroke="#000" stroke-width="1.2"/><circle cx="47.5" cy="199.5" r="1.5" fill="#d4d4d4" stroke="#000" stroke-width="1.1"/>
<rect x="61" y="194" width="3" height="3" rx="1" fill="#50ff30"/>
<path d="M61.2 204.9 L66.2 200" stroke="#000" stroke-width="2.8" stroke-linecap="round"/><path d="M61.6 204.5 L65.8 200.4" stroke="#c8c8d8" stroke-width="0.8" stroke-dasharray="0.8 0.8"/>
<circle cx="69.4" cy="197.4" r="3.7" fill="#d8d8fc" stroke="#000" stroke-width="1.2"/><path d="M67 197.4 H71.8 M69.4 195 V199.8" stroke="#000" stroke-width="1.5"/>
<path d="M68.8 202.8 H74.2 L71.5 205.6 Z" fill="#000"/>
<rect x="82" y="194" width="3" height="3" rx="1" fill="#3c6e3c"/>
<path d="M86.5 199.5 V195 Q86.5 194 87.5 194 Q88.5 194 88.5 195 V199.5 M88.5 195 V194 Q88.5 193 89.5 193 Q90.5 193 90.5 194 V199.5 M90.5 195 Q90.5 194 91.5 194 Q92.5 194 92.5 195 V199.5 M92.5 197 Q92.5 196 93.5 196 Q94.5 196 94.5 197 V201 L92.5 204.5 M86.5 199.5 L85.5 198.8 Q84.2 198.6 84.3 199.8 L86.6 204.6" stroke="#000" stroke-width="1" fill="none"/>
<g stroke="#50f000" stroke-width="1.5" stroke-linecap="round" fill="none"><path d="M585.5 201.5 L587.5 199.5 M591.5 195.5 L593.5 193.5 M595.5 191.5 L597.5 193.5 M601.5 197.5 L603.5 199.5 M605.5 201.5 L607.5 199.5"/></g>
<g stroke="#ff4040" stroke-width="1" fill="none"><path d="M726.5 201.7 L736.5 190.9 L746.7 201.9 L750.7 197.5"/><path d="M735 189.4 L738 192.4 M738 189.4 L735 192.4 M745.2 200.4 L748.2 203.4 M748.2 200.4 L745.2 203.4 M725.2 200.4 L727.8 203 M727.8 200.4 L725.2 203" stroke-width="0.8"/></g>
<rect x="98" y="220" width="646" height="226" fill="#e6e6e6"/>
<rect x="98" y="220" width="645" height="225" fill="#707070"/>
<rect x="99" y="221" width="644" height="224" fill="#000"/>
<path d="M106.5 221V445 M113.5 221V445 M120.5 221V445 M128.5 221V445 M135.5 221V445 M142.5 221V445 M149.5 221V445 M156.5 221V445 M163.5 221V445 M178.5 221V445 M185.5 221V445 M192.5 221V445 M199.5 221V445 M206.5 221V445 M213.5 221V445 M221.5 221V445 M228.5 221V445 M235.5 221V445 M249.5 221V445 M256.5 221V445 M263.5 221V445 M271.5 221V445 M278.5 221V445 M285.5 221V445 M292.5 221V445 M299.5 221V445 M306.5 221V445 M321.5 221V445 M328.5 221V445 M335.5 221V445 M342.5 221V445 M349.5 221V445 M356.5 221V445 M364.5 221V445 M371.5 221V445 M378.5 221V445 M392.5 221V445 M399.5 221V445 M406.5 221V445 M414.5 221V445 M421.5 221V445 M428.5 221V445 M435.5 221V445 M442.5 221V445 M449.5 221V445 M464.5 221V445 M471.5 221V445 M478.5 221V445 M485.5 221V445 M492.5 221V445 M499.5 221V445 M507.5 221V445 M514.5 221V445 M521.5 221V445 M535.5 221V445 M542.5 221V445 M549.5 221V445 M557.5 221V445 M564.5 221V445 M571.5 221V445 M578.5 221V445 M585.5 221V445 M592.5 221V445 M607.5 221V445 M614.5 221V445 M621.5 221V445 M628.5 221V445 M635.5 221V445 M642.5 221V445 M650.5 221V445 M657.5 221V445 M664.5 221V445 M678.5 221V445 M685.5 221V445 M692.5 221V445 M700.5 221V445 M707.5 221V445 M714.5 221V445 M721.5 221V445 M728.5 221V445 M735.5 221V445 M99 435.5H743 M99 426.5H743 M99 416.5H743 M99 398.5H743 M99 389.5H743 M99 379.5H743 M99 361.5H743 M99 351.5H743 M99 342.5H743 M99 323.5H743 M99 314.5H743 M99 305.5H743 M99 286.5H743 M99 277.5H743 M99 268.5H743 M99 249.5H743 M99 240.5H743 M99 230.5H743" stroke="#5e5500" stroke-width="1" fill="none"/>
<path d="M170.5 221V445 M242.5 221V445 M313.5 221V445 M385.5 221V445 M456.5 221V445 M528.5 221V445 M599.5 221V445 M671.5 221V445 M99 407.5H743 M99 370.5H743 M99 333.5H743 M99 295.5H743 M99 258.5H743" stroke="#a09c00" stroke-width="1" fill="none"/>
<path d="M102 433.5H406" stroke="#5ae800" stroke-width="1" stroke-dasharray="3 3" fill="none"/>
<defs><clipPath id="pc"><rect x="99" y="221" width="644" height="224"/></clipPath><marker id="mk" markerUnits="userSpaceOnUse" markerWidth="4" markerHeight="4" refX="2" refY="2" overflow="visible"><path d="M0.5 2H3.5M2 0.5V3.5" stroke="#ff4848" stroke-width="1" shape-rendering="crispEdges"/></marker></defs>
<g clip-path="url(#pc)"><polyline points="98.0,444.3 98.5,444.3 99.0,444.3 99.5,444.3 100.0,444.3 100.5,444.3 101.0,444.3 101.5,444.3 102.0,444.3 102.5,444.3 103.0,444.3 103.5,444.3 104.0,444.3 104.5,444.3 105.0,444.3 105.5,444.3 106.0,444.3 106.5,444.3 107.0,444.3 107.5,444.3 108.0,444.3 108.5,444.3 109.0,444.3 109.5,444.3 110.0,444.3 110.5,444.3 111.0,444.3 111.5,444.3 112.0,444.3 112.5,444.3 113.0,444.3 113.5,444.3 114.0,444.3 114.5,444.3 115.0,444.3 115.5,444.3 116.0,444.3 116.5,444.3 117.0,444.3 117.5,444.3 118.0,444.3 118.5,444.3 119.0,444.3 119.5,444.3 120.0,444.3 120.5,444.3 121.0,444.3 121.5,444.3 122.0,444.3 122.5,444.3 123.0,444.3 123.5,444.3 124.0,444.3 124.5,444.3 125.0,444.3 125.5,444.3 126.0,444.3 126.5,444.3 127.0,444.3 127.5,444.3 128.0,444.3 128.5,444.3 129.0,444.3 129.5,444.3 130.0,444.3 130.5,444.3 131.0,444.3 131.5,444.3 132.0,444.3 132.5,444.3 133.0,444.3 133.5,444.3 134.0,444.3 134.5,444.3 135.0,444.3 135.5,444.3 136.0,444.3 136.5,444.3 137.0,444.3 137.5,444.3 138.0,444.3 138.5,444.3 139.0,444.3 139.5,444.3 140.0,444.3 140.5,444.3 141.0,444.3 141.5,444.3 142.0,444.3 142.5,444.3 143.0,444.3 143.5,444.3 144.0,444.3 144.5,444.3 145.0,444.3 145.5,444.3 146.0,444.3 146.5,444.3 147.0,444.3 147.5,444.3 148.0,444.3 148.5,444.3 149.0,444.3 149.5,444.3 150.0,444.3 150.5,444.3 151.0,444.3 151.5,444.3 152.0,444.3 152.5,444.3 153.0,444.3 153.5,444.3 154.0,444.3 154.5,444.3 155.0,444.3 155.5,444.3 156.0,444.3 156.5,444.3 157.0,444.3 157.5,444.3 158.0,444.3 158.5,444.3 159.0,444.3 159.5,444.3 160.0,444.3 160.5,444.3 161.0,444.3 161.5,444.3 162.0,444.3 162.5,444.3 163.0,444.3 163.5,444.3 164.0,444.3 164.5,444.3 165.0,444.3 165.5,444.3 166.0,444.3 166.5,444.3 167.0,444.3 167.5,444.3 168.0,444.3 168.5,444.3 169.0,444.3 169.5,444.3 170.0,444.3 170.5,444.3 171.0,444.3 171.5,444.3 172.0,444.3 172.5,444.3 173.0,444.3 173.5,444.3 174.0,444.3 174.5,444.3 175.0,444.3 175.5,444.3 176.0,444.3 176.5,444.3 177.0,444.3 177.5,444.3 178.0,444.3 178.5,444.3 179.0,444.3 179.5,444.3 180.0,444.3 180.5,444.3 181.0,444.3 181.5,444.3 182.0,444.3 182.5,444.3 183.0,444.3 183.5,444.3 184.0,444.3 184.5,444.3 185.0,444.3 185.5,444.3 186.0,444.3 186.5,444.3 187.0,444.3 187.5,444.3 188.0,444.3 188.5,444.3 189.0,444.3 189.5,444.3 190.0,444.3 190.5,444.3 191.0,444.3 191.5,444.3 192.0,444.3 192.5,444.3 193.0,444.3 193.5,444.3 194.0,444.3 194.5,444.3 195.0,444.3 195.5,444.3 196.0,444.3 196.5,444.3 197.0,444.3 197.5,444.3 198.0,444.3 198.5,444.3 199.0,444.3 199.5,444.3 200.0,444.3 200.5,444.3 201.0,444.3 201.5,444.3 202.0,444.3 202.5,444.3 203.0,444.3 203.5,444.3 204.0,444.3 204.5,444.3 205.0,444.3 205.5,444.3 206.0,444.3 206.5,444.3 207.0,444.3 207.5,444.3 208.0,444.3 208.5,444.3 209.0,444.3 209.5,444.3 210.0,444.3 210.5,444.3 211.0,444.3 211.5,444.3 212.0,444.3 212.5,444.3 213.0,444.3 213.5,444.3 214.0,444.3 214.5,444.3 215.0,444.3 215.5,444.3 216.0,444.3 216.5,444.3 217.0,444.3 217.5,444.3 218.0,444.3 218.5,444.3 219.0,444.3 219.5,444.3 220.0,444.3 220.5,444.3 221.0,444.3 221.5,444.3 222.0,444.3 222.5,444.3 223.0,444.3 223.5,444.3 224.0,444.3 224.5,444.3 225.0,444.3 225.5,444.3 226.0,444.3 226.5,444.3 227.0,444.3 227.5,444.3 228.0,444.3 228.5,444.3 229.0,444.3 229.5,444.3 230.0,444.3 230.5,444.3 231.0,444.3 231.5,444.3 232.0,444.3 232.5,444.3 233.0,444.3 233.5,444.3 234.0,444.3 234.5,444.3 235.0,444.3 235.5,444.3 236.0,444.3 236.5,444.3 237.0,444.3 237.5,444.3 238.0,444.3 238.5,444.3 239.0,444.3 239.5,444.3 240.0,444.3 240.5,444.3 241.0,444.3 241.5,444.3 242.0,444.3 242.5,444.3 243.0,444.3 243.5,444.3 244.0,444.3 244.5,444.3 245.0,444.3 245.5,444.3 246.0,444.3 246.5,444.3 247.0,444.3 247.5,444.2 248.0,444.2 248.5,444.2 249.0,444.2 249.5,444.2 250.0,444.2 250.5,444.2 251.0,444.2 251.5,444.2 252.0,444.2 252.5,444.2 253.0,444.2 253.5,444.2 254.0,444.2 254.5,444.2 255.0,444.2 255.5,444.2 256.0,444.2 256.5,444.2 257.0,444.2 257.5,444.2 258.0,444.2 258.5,444.2 259.0,444.2 259.5,444.2 260.0,444.2 260.5,444.2 261.0,444.1 261.5,444.1 262.0,444.1 262.5,444.1 263.0,444.1 263.5,444.1 264.0,444.1 264.5,444.1 265.0,444.1 265.5,444.1 266.0,444.1 266.5,444.1 267.0,444.1 267.5,444.0 268.0,444.0 268.5,444.0 269.0,444.0 269.5,444.0 270.0,444.0 270.5,444.0 271.0,444.0 271.5,443.9 272.0,443.9 272.5,443.9 273.0,443.9 273.5,443.9 274.0,443.9 274.5,443.8 275.0,443.8 275.5,443.8 276.0,443.8 276.5,443.8 277.0,443.7 277.5,443.7 278.0,443.7 278.5,443.7 279.0,443.6 279.5,443.6 280.0,443.6 280.5,443.6 281.0,443.5 281.5,443.5 282.0,443.5 282.5,443.4 283.0,443.4 283.5,443.4 284.0,443.3 284.5,443.3 285.0,443.2 285.5,443.2 286.0,443.1 286.5,443.1 287.0,443.0 287.5,443.0 288.0,442.9 288.5,442.9 289.0,442.8 289.5,442.8 290.0,442.7 290.5,442.6 291.0,442.6 291.5,442.5 292.0,442.4 292.5,442.3 293.0,442.3 293.5,442.2 294.0,442.1 294.5,442.0 295.0,441.9 295.5,441.8 296.0,441.7 296.5,441.6 297.0,441.5 297.5,441.4 298.0,441.2 298.5,441.1 299.0,441.0 299.5,440.8 300.0,440.7 300.5,440.6 301.0,440.4 301.5,440.3 302.0,440.1 302.5,439.9 303.0,439.7 303.5,439.5 304.0,439.4 304.5,439.2 305.0,438.9 305.5,438.7 306.0,438.5 306.5,438.3 307.0,438.0 307.5,437.8 308.0,437.5 308.5,437.2 309.0,437.0 309.5,436.7 310.0,436.4 310.5,436.0 311.0,435.7 311.5,435.4 312.0,435.0 312.5,434.6 313.0,434.3 313.5,433.9 314.0,433.4 314.5,433.0 315.0,432.6 315.5,432.1 316.0,431.6 316.5,431.1 317.0,430.6 317.5,430.1 318.0,429.5 318.5,429.0 319.0,428.4 319.5,427.8 320.0,427.1 320.5,426.5 321.0,425.8 321.5,425.1 322.0,424.4 322.5,423.6 323.0,422.8 323.5,422.0 324.0,421.2 324.5,420.3 325.0,419.5 325.5,418.5 326.0,417.6 326.5,416.6 327.0,415.6 327.5,414.6 328.0,413.5 328.5,412.4 329.0,411.3 329.5,410.2 330.0,409.0 330.5,407.7 331.0,406.5 331.5,405.2 332.0,403.9 332.5,402.5 333.0,401.1 333.5,399.7 334.0,398.2 334.5,396.7 335.0,395.1 335.5,393.6 336.0,392.0 336.5,390.3 337.0,388.6 337.5,386.9 338.0,385.2 338.5,383.4 339.0,381.6 339.5,379.7 340.0,377.8 340.5,375.9 341.0,374.0 341.5,372.0 342.0,370.0 342.5,368.0 343.0,365.9 343.5,363.9 344.0,361.8 344.5,359.7 345.0,357.5 345.5,355.4 346.0,353.2 346.5,351.0 347.0,348.8 347.5,346.6 348.0,344.3 348.5,342.1 349.0,339.8 349.5,337.6 350.0,335.3 350.5,333.1 351.0,330.8 351.5,328.6 352.0,326.3 352.5,324.1 353.0,321.9 353.5,319.6 354.0,317.4 354.5,315.2 355.0,313.0 355.5,310.9 356.0,308.7 356.5,306.6 357.0,304.5 357.5,302.4 358.0,300.4 358.5,298.3 359.0,296.3 359.5,294.3 360.0,292.4 360.5,290.5 361.0,288.6 361.5,286.7 362.0,284.9 362.5,283.1 363.0,281.4 363.5,279.6 364.0,278.0 364.5,276.3 365.0,274.7 365.5,273.1 366.0,271.6 366.5,270.1 367.0,268.6 367.5,267.2 368.0,265.8 368.5,264.4 369.0,263.1 369.5,261.8 370.0,260.6 370.5,259.4 371.0,258.2 371.5,257.0 372.0,255.9 372.5,254.9 373.0,253.8 373.5,252.8 374.0,251.8 374.5,250.9 375.0,250.0 375.5,249.1 376.0,248.3 376.5,247.5 377.0,246.7 377.5,245.9 378.0,245.2 378.5,244.5 379.0,243.9 379.5,243.2 380.0,242.6 380.5,242.0 381.0,241.5 381.5,240.9 382.0,240.4 382.5,239.9 383.0,239.5 383.5,239.1 384.0,238.7 384.5,238.3 385.0,237.9 385.5,237.6 386.0,237.2 386.5,237.0 387.0,236.7 387.5,236.4 388.0,236.2 388.5,236.0 389.0,235.8 389.5,235.6 390.0,235.5 390.5,235.4 391.0,235.2 391.5,235.2 392.0,235.1 392.5,235.0 393.0,235.0 393.5,235.0 394.0,235.0 394.5,235.0 395.0,235.1 395.5,235.2 396.0,235.2 396.5,235.4 397.0,235.5 397.5,235.6 398.0,235.8 398.5,236.0 399.0,236.2 399.5,236.4 400.0,236.7 400.5,237.0 401.0,237.2 401.5,237.6 402.0,237.9 402.5,238.3 403.0,238.7 403.5,239.1 404.0,239.5 404.5,239.9 405.0,240.4 405.5,240.9 406.0,241.5 406.5,242.0 407.0,242.6 407.5,243.2 408.0,243.9 408.5,244.5 409.0,245.2 409.5,245.9 410.0,246.7 410.5,247.5 411.0,248.3 411.5,249.1 412.0,250.0 412.5,250.9 413.0,251.8 413.5,252.8 414.0,253.8 414.5,254.9 415.0,255.9 415.5,257.0 416.0,258.2 416.5,259.4 417.0,260.6 417.5,261.8 418.0,263.1 418.5,264.4 419.0,265.8 419.5,267.2 420.0,268.6 420.5,270.1 421.0,271.6 421.5,273.1 422.0,274.7 422.5,276.3 423.0,278.0 423.5,279.6 424.0,281.4 424.5,283.1 425.0,284.9 425.5,286.7 426.0,288.6 426.5,290.5 427.0,292.4 427.5,294.3 428.0,296.3 428.5,298.3 429.0,300.4 429.5,302.4 430.0,304.5 430.5,306.6 431.0,308.7 431.5,310.9 432.0,313.0 432.5,315.2 433.0,317.4 433.5,319.6 434.0,321.9 434.5,324.1 435.0,326.3 435.5,328.6 436.0,330.8 436.5,333.1 437.0,335.3 437.5,337.6 438.0,339.8 438.5,342.1 439.0,344.3 439.5,346.6 440.0,348.8 440.5,351.0 441.0,353.2 441.5,355.4 442.0,357.5 442.5,359.7 443.0,361.8 443.5,363.9 444.0,365.9 444.5,368.0 445.0,370.0 445.5,372.0 446.0,374.0 446.5,375.9 447.0,377.8 447.5,379.7 448.0,381.6 448.5,383.4 449.0,385.2 449.5,386.9 450.0,388.6 450.5,390.3 451.0,392.0 451.5,393.6 452.0,395.1 452.5,396.7 453.0,398.2 453.5,399.7 454.0,401.1 454.5,402.5 455.0,403.9 455.5,405.2 456.0,406.5 456.5,407.7 457.0,409.0 457.5,410.2 458.0,411.3 458.5,412.4 459.0,413.5 459.5,414.6 460.0,415.6 460.5,416.6 461.0,417.6 461.5,418.5 462.0,419.5 462.5,420.3 463.0,421.2 463.5,422.0 464.0,422.8 464.5,423.6 465.0,424.4 465.5,425.1 466.0,425.8 466.5,426.5 467.0,427.1 467.5,427.8 468.0,428.4 468.5,429.0 469.0,429.5 469.5,430.1 470.0,430.6 470.5,431.1 471.0,431.6 471.5,432.1 472.0,432.6 472.5,433.0 473.0,433.4 473.5,433.9 474.0,434.3 474.5,434.6 475.0,435.0 475.5,435.4 476.0,435.7 476.5,436.0 477.0,436.4 477.5,436.7 478.0,437.0 478.5,437.2 479.0,437.5 479.5,437.8 480.0,438.0 480.5,438.3 481.0,438.5 481.5,438.7 482.0,438.9 482.5,439.2 483.0,439.4 483.5,439.5 484.0,439.7 484.5,439.9 485.0,440.1 485.5,440.3 486.0,440.4 486.5,440.6 487.0,440.7 487.5,440.8 488.0,441.0 488.5,441.1 489.0,441.2 489.5,441.4 490.0,441.5 490.5,441.6 491.0,441.7 491.5,441.8 492.0,441.9 492.5,442.0 493.0,442.1 493.5,442.2 494.0,442.3 494.5,442.3 495.0,442.4 495.5,442.5 496.0,442.6 496.5,442.6 497.0,442.7 497.5,442.8 498.0,442.8 498.5,442.9 499.0,442.9 499.5,443.0 500.0,443.0 500.5,443.1 501.0,443.1 501.5,443.2 502.0,443.2 502.5,443.3 503.0,443.3 503.5,443.4 504.0,443.4 504.5,443.4 505.0,443.5 505.5,443.5 506.0,443.5 506.5,443.6 507.0,443.6 507.5,443.6 508.0,443.6 508.5,443.7 509.0,443.7 509.5,443.7 510.0,443.7 510.5,443.8 511.0,443.8 511.5,443.8 512.0,443.8 512.5,443.8 513.0,443.9 513.5,443.9 514.0,443.9 514.5,443.9 515.0,443.9 515.5,443.9 516.0,444.0 516.5,444.0 517.0,444.0 517.5,444.0 518.0,444.0 518.5,444.0 519.0,444.0 519.5,444.0 520.0,444.1 520.5,444.1 521.0,444.1 521.5,444.1 522.0,444.1 522.5,444.1 523.0,444.1 523.5,444.1 524.0,444.1 524.5,444.1 525.0,444.1 525.5,444.1 526.0,444.1 526.5,444.2 527.0,444.2 527.5,444.2 528.0,444.2 528.5,444.2 529.0,444.2 529.5,444.2 530.0,444.2 530.5,444.2 531.0,444.2 531.5,444.2 532.0,444.2 532.5,444.2 533.0,444.2 533.5,444.2 534.0,444.2 534.5,444.2 535.0,444.2 535.5,444.2 536.0,444.2 536.5,444.2 537.0,444.2 537.5,444.2 538.0,444.2 538.5,444.2 539.0,444.2 539.5,444.2 540.0,444.3 540.5,444.3 541.0,444.3 541.5,444.3 542.0,444.3 542.5,444.3 543.0,444.3 543.5,444.3 544.0,444.3 544.5,444.3 545.0,444.3 545.5,444.3 546.0,444.3 546.5,444.3 547.0,444.3 547.5,444.3 548.0,444.3 548.5,444.3 549.0,444.3 549.5,444.3 550.0,444.3 550.5,444.3 551.0,444.3 551.5,444.3 552.0,444.3 552.5,444.3 553.0,444.3 553.5,444.3 554.0,444.3 554.5,444.3 555.0,444.3 555.5,444.3 556.0,444.3 556.5,444.3 557.0,444.3 557.5,444.3 558.0,444.3 558.5,444.3 559.0,444.3 559.5,444.3 560.0,444.3 560.5,444.3 561.0,444.3 561.5,444.3 562.0,444.3 562.5,444.3 563.0,444.3 563.5,444.3 564.0,444.3 564.5,444.3 565.0,444.3 565.5,444.3 566.0,444.3 566.5,444.3 567.0,444.3 567.5,444.3 568.0,444.3 568.5,444.3 569.0,444.3 569.5,444.3 570.0,444.3 570.5,444.3 571.0,444.3 571.5,444.3 572.0,444.3 572.5,444.3 573.0,444.3 573.5,444.3 574.0,444.3 574.5,444.3 575.0,444.3 575.5,444.3 576.0,444.3 576.5,444.3 577.0,444.3 577.5,444.3 578.0,444.3 578.5,444.3 579.0,444.3 579.5,444.3 580.0,444.3 580.5,444.3 581.0,444.3 581.5,444.3 582.0,444.3 582.5,444.3 583.0,444.3 583.5,444.3 584.0,444.3 584.5,444.3 585.0,444.3 585.5,444.3 586.0,444.3 586.5,444.3 587.0,444.3 587.5,444.3 588.0,444.3 588.5,444.3 589.0,444.3 589.5,444.3 590.0,444.3 590.5,444.3 591.0,444.3 591.5,444.3 592.0,444.3 592.5,444.3 593.0,444.3 593.5,444.3 594.0,444.3 594.5,444.3 595.0,444.3 595.5,444.3 596.0,444.3 596.5,444.3 597.0,444.3 597.5,444.3 598.0,444.3 598.5,444.3 599.0,444.3 599.5,444.3 600.0,444.3 600.5,444.3 601.0,444.3 601.5,444.3 602.0,444.3 602.5,444.3 603.0,444.3 603.5,444.3 604.0,444.3 604.5,444.3 605.0,444.3 605.5,444.3 606.0,444.3 606.5,444.3 607.0,444.3 607.5,444.3 608.0,444.3 608.5,444.3 609.0,444.3 609.5,444.3 610.0,444.3 610.5,444.3 611.0,444.3 611.5,444.3 612.0,444.3 612.5,444.3 613.0,444.3 613.5,444.3 614.0,444.3 614.5,444.3 615.0,444.3 615.5,444.3 616.0,444.3 616.5,444.3 617.0,444.3 617.5,444.3 618.0,444.3 618.5,444.3 619.0,444.3 619.5,444.3 620.0,444.3 620.5,444.3 621.0,444.3 621.5,444.3 622.0,444.3 622.5,444.3 623.0,444.3 623.5,444.3 624.0,444.3 624.5,444.3 625.0,444.3 625.5,444.3 626.0,444.3 626.5,444.3 627.0,444.3 627.5,444.3 628.0,444.3 628.5,444.3 629.0,444.3 629.5,444.3 630.0,444.3 630.5,444.3 631.0,444.3 631.5,444.3 632.0,444.3 632.5,444.3 633.0,444.3 633.5,444.3 634.0,444.3 634.5,444.3 635.0,444.3 635.5,444.3 636.0,444.3 636.5,444.3 637.0,444.3 637.5,444.3 638.0,444.3 638.5,444.3 639.0,444.3 639.5,444.3 640.0,444.3 640.5,444.3 641.0,444.3 641.5,444.3 642.0,444.3 642.5,444.3 643.0,444.3 643.5,444.3 644.0,444.3 644.5,444.3 645.0,444.3 645.5,444.3 646.0,444.3 646.5,444.3 647.0,444.3 647.5,444.3 648.0,444.3 648.5,444.3 649.0,444.3 649.5,444.3 650.0,444.3 650.5,444.3 651.0,444.3 651.5,444.3 652.0,444.3 652.5,444.3 653.0,444.3 653.5,444.3 654.0,444.3 654.5,444.3 655.0,444.3 655.5,444.3 656.0,444.3 656.5,444.3 657.0,444.3 657.5,444.3 658.0,444.3 658.5,444.3 659.0,444.3 659.5,444.3 660.0,444.3 660.5,444.3 661.0,444.3 661.5,444.3 662.0,444.3 662.5,444.3 663.0,444.3 663.5,444.3 664.0,444.3 664.5,444.3 665.0,444.3 665.5,444.3 666.0,444.3 666.5,444.3 667.0,444.3 667.5,444.3 668.0,444.3 668.5,444.3 669.0,444.3 669.5,444.3 670.0,444.3 670.5,444.3 671.0,444.3 671.5,444.3 672.0,444.3 672.5,444.3 673.0,444.3 673.5,444.3 674.0,444.3 674.5,444.3 675.0,444.3 675.5,444.3 676.0,444.3 676.5,444.3 677.0,444.3 677.5,444.3 678.0,444.3 678.5,444.3 679.0,444.3 679.5,444.3 680.0,444.3 680.5,444.3 681.0,444.3 681.5,444.3 682.0,444.3 682.5,444.3 683.0,444.3 683.5,444.3 684.0,444.3 684.5,444.3 685.0,444.3 685.5,444.3 686.0,444.3 686.5,444.3 687.0,444.3 687.5,444.3 688.0,444.3 688.5,444.3 689.0,444.3 689.5,444.3 690.0,444.3 690.5,444.3 691.0,444.3 691.5,444.3 692.0,444.3 692.5,444.3 693.0,444.3 693.5,444.3 694.0,444.3 694.5,444.3 695.0,444.3 695.5,444.3 696.0,444.3 696.5,444.3 697.0,444.3 697.5,444.3 698.0,444.3 698.5,444.3 699.0,444.3 699.5,444.3 700.0,444.3 700.5,444.3 701.0,444.3 701.5,444.3 702.0,444.3 702.5,444.3 703.0,444.3 703.5,444.3 704.0,444.3 704.5,444.3 705.0,444.3 705.5,444.3 706.0,444.3 706.5,444.3 707.0,444.3 707.5,444.3 708.0,444.3 708.5,444.3 709.0,444.3 709.5,444.3 710.0,444.3 710.5,444.3 711.0,444.3 711.5,444.3 712.0,444.3 712.5,444.3 713.0,444.3 713.5,444.3 714.0,444.3 714.5,444.3 715.0,444.3 715.5,444.3 716.0,444.3 716.5,444.3 717.0,444.3 717.5,444.3 718.0,444.3 718.5,444.3 719.0,444.3 719.5,444.3 720.0,444.3 720.5,444.3 721.0,444.3 721.5,444.3 722.0,444.3 722.5,444.3 723.0,444.3 723.5,444.3 724.0,444.3 724.5,444.3 725.0,444.3 725.5,444.3 726.0,444.3 726.5,444.3 727.0,444.3 727.5,444.3 728.0,444.3 728.5,444.3 729.0,444.3 729.5,444.3 730.0,444.3 730.5,444.3 731.0,444.3 731.5,444.3 732.0,444.3 732.5,444.3 733.0,444.3 733.5,444.3 734.0,444.3 734.5,444.3 735.0,444.3 735.5,444.3 736.0,444.3 736.5,444.3 737.0,444.3 737.5,444.3 738.0,444.3 738.5,444.3 739.0,444.3 739.5,444.3 740.0,444.3 740.5,444.3 741.0,444.3 741.5,444.3 742.0,444.3 742.5,444.3 743.0,444.3 743.5,444.3 744.0,444.3" stroke="#ff4848" stroke-width="1.2" fill="none" marker-mid="url(#mk)"/></g>
<path d="M99.5 447V452 M170.5 447V452 M242.5 447V452 M313.5 447V452 M385.5 447V452 M456.5 447V452 M528.5 447V452 M599.5 447V452 M671.5 447V452 M742.5 447V452 M92 444.5H97 M92 407.5H97 M92 370.5H97 M92 333.5H97 M92 295.5H97 M92 258.5H97 M92 221.5H97" stroke="#000" stroke-width="1" fill="none"/>
</svg>
<div class="t" style="left:-1.5px;width:200px;text-align:center;top:454.37px;font-size:12.5px;transform-origin:50% 0;transform:scaleX(0.9);">0.05</div>
<div class="t" style="left:69.5px;width:200px;text-align:center;top:454.37px;font-size:12.5px;transform-origin:50% 0;transform:scaleX(0.9);">0.1</div>
<div class="t" style="left:141.5px;width:200px;text-align:center;top:454.37px;font-size:12.5px;transform-origin:50% 0;transform:scaleX(0.9);">0.15</div>
<div class="t" style="left:212.5px;width:200px;text-align:center;top:454.37px;font-size:12.5px;transform-origin:50% 0;transform:scaleX(0.9);">0.2</div>
<div class="t" style="left:284.5px;width:200px;text-align:center;top:454.37px;font-size:12.5px;transform-origin:50% 0;transform:scaleX(0.9);">0.25</div>
<div class="t" style="left:355.5px;width:200px;text-align:center;top:454.37px;font-size:12.5px;transform-origin:50% 0;transform:scaleX(0.9);">0.3</div>
<div class="t" style="left:427.5px;width:200px;text-align:center;top:454.37px;font-size:12.5px;transform-origin:50% 0;transform:scaleX(0.9);">0.35</div>
<div class="t" style="left:498.5px;width:200px;text-align:center;top:454.37px;font-size:12.5px;transform-origin:50% 0;transform:scaleX(0.9);">0.4</div>
<div class="t" style="left:570.5px;width:200px;text-align:center;top:454.37px;font-size:12.5px;transform-origin:50% 0;transform:scaleX(0.9);">0.45</div>
<div class="t" style="left:641.5px;width:200px;text-align:center;top:454.37px;font-size:12.5px;transform-origin:50% 0;transform:scaleX(0.9);">0.5</div>
<div class="t" style="right:681.5px;top:439.37px;font-size:12.5px;transform-origin:100% 0;transform:scaleX(0.93);">0</div>
<div class="t" style="right:681.5px;top:402.37px;font-size:12.5px;transform-origin:100% 0;transform:scaleX(0.93);">20</div>
<div class="t" style="right:681.5px;top:365.37px;font-size:12.5px;transform-origin:100% 0;transform:scaleX(0.93);">40</div>
<div class="t" style="right:681.5px;top:328.37px;font-size:12.5px;transform-origin:100% 0;transform:scaleX(0.93);">60</div>
<div class="t" style="right:681.5px;top:290.37px;font-size:12.5px;transform-origin:100% 0;transform:scaleX(0.93);">80</div>
<div class="t" style="right:681.5px;top:253.37px;font-size:12.5px;transform-origin:100% 0;transform:scaleX(0.93);">100</div>
<div class="t" style="right:681.5px;top:216.37px;font-size:12.5px;transform-origin:100% 0;transform:scaleX(0.93);">120</div>
<div class="t" style="left:315.8px;width:200px;text-align:center;top:471.37px;font-size:12.5px;transform-origin:50% 0;transform:scaleX(0.964);">Axial Position (m)</div>
<div class="t" style="left:-38.5px;top:325.5px;width:200px;text-align:center;font-size:12.5px;transform:rotate(-90deg) scaleX(0.938);">On-Axis Potential (V)</div>
</body></html>
